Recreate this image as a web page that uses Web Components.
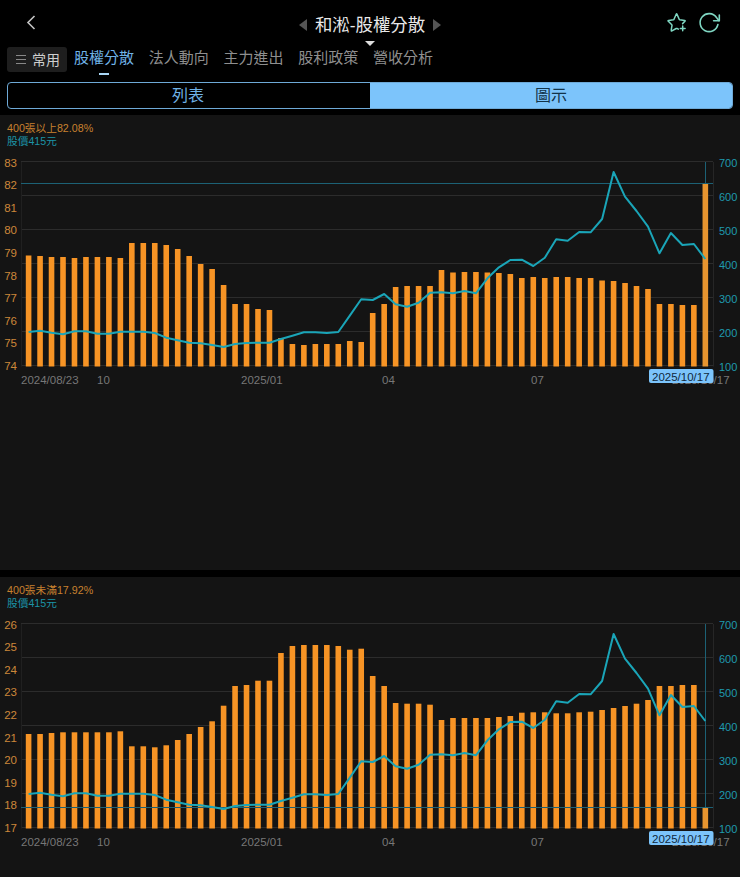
<!DOCTYPE html>
<html lang="zh-Hant">
<head>
<meta charset="utf-8">
<title>股權分散</title>
<style>
    html, body { margin: 0; background: #000; height: 877px; overflow: hidden; }
    body { font-family: "Liberation Sans", "Noto Sans CJK TC", sans-serif; display: flex; flex-direction: column; }
</style>
</head>
<body>
<stock-header>和淞-股權分散</stock-header>
<tab-bar>
    <tab-item active>股權分散</tab-item>
    <tab-item>法人動向</tab-item>
    <tab-item>主力進出</tab-item>
    <tab-item>股利政策</tab-item>
    <tab-item>營收分析</tab-item>
</tab-bar>
<view-toggle left="列表" right="圖示"></view-toggle>

<holding-chart id="upper" max="83" cross="21" style="height:455px">
    400張以上82.08%
    <span slot="price">股價415元</span>
</holding-chart>
<holding-chart id="lower" max="26" cross="183" style="height:300px;margin-top:7px">
    400張未滿17.92%
    <span slot="price">股價415元</span>
</holding-chart>

<script>
const FONT = `"Liberation Sans", "Noto Sans CJK TC", sans-serif`;

class StockHeader extends HTMLElement {
    constructor() {
        super();
        this.attachShadow({ mode: "open" });
        this.shadowRoot.innerHTML = `
            <style>
                :host { display: grid; grid-template-columns: 1fr auto 1fr; align-items: center; height: 47px; position: relative; font-family: ${FONT}; }
                #back { padding: 6px 0 0 26px; height: 26px; }
                #title { display: flex; align-items: center; gap: 8px; color: #e8e8e8; font-size: 17.4px; line-height: 24px; padding-top: 3px; }
                #title i { width: 0; height: 0; border-top: 6px solid transparent; border-bottom: 6px solid transparent; }
                #prev { border-right: 8px solid #555; }
                #next { border-left: 8px solid #555; }
                #tools { display: flex; justify-content: flex-end; gap: 9px; padding: 0 18px 0 0; margin-bottom: 1px; }
                #caret { position: absolute; left: 365px; top: 41px; width: 0; height: 0; border-left: 5px solid transparent; border-right: 5px solid transparent; border-top: 5px solid #ddd; }
                svg { display: block; fill: none; }
            </style>
            <div id="back">
                <svg width="12" height="18" viewBox="0 0 12 18"><path d="M8.5 2L2 8.5L8.5 15" stroke="#c4c4c4" stroke-width="1.6"/></svg>
            </div>
            <div id="title"><i id="prev"></i><slot></slot><i id="next"></i></div>
            <div id="tools">
                <svg width="24" height="24" viewBox="0 0 24 24" stroke="#7fd6c2" stroke-width="1.5" stroke-linejoin="round" stroke-linecap="round">
                    <path d="M13.4 18.2L12 17.5Q11.6 17.3 11.2 17.5L6.9 19.8Q6 20.2 6.2 19.2L7 14.4Q7.1 14 6.8 13.7L3.3 10.3Q2.6 9.6 3.6 9.4L8.4 8.7Q8.8 8.6 9 8.3L11.2 3.2Q11.6 2.3 12 3.2L14.2 8.3Q14.4 8.6 14.8 8.7L19.6 9.4Q20.6 9.6 19.9 10.3L17.6 12.6"/>
                    <path d="M17.7 15v4.8M15.3 17.4h4.8"/>
                </svg>
                <svg width="24" height="24" viewBox="0 0 24 24" stroke="#7fd6c2" stroke-width="1.6" stroke-linejoin="round" stroke-linecap="round">
                    <path d="M19.9 13.5A9 9 0 1 1 18.5 6.5L21 9.7"/>
                    <path d="M21.3 4v5.7h-5.7"/>
                </svg>
            </div>
            <div id="caret"></div>
        `;
    }
}
customElements.define("stock-header", StockHeader);

class TabBar extends HTMLElement {
    constructor() {
        super();
        this.attachShadow({ mode: "open" });
        this.shadowRoot.innerHTML = `
            <style>
                :host { display: flex; align-items: flex-start; gap: 7px; height: 35px; padding-left: 7px; font-family: ${FONT}; }
                #fav { display: flex; align-items: center; gap: 6px; box-sizing: border-box; width: 60px; height: 25px; padding: 0 0 1px 9px; background: #1e1e1e; border-radius: 3px; color: #cfcfcf; font-size: 14px; }
                #fav span { display: block; width: 10px; height: 7px; border-top: 1px solid #888; border-bottom: 1px solid #888; position: relative; }
                #fav span::after { content: ""; position: absolute; left: 0; right: 0; top: 3px; height: 1px; background: #888; }
                #tabs { display: flex; gap: 14.75px; }
            </style>
            <div id="fav"><span></span>常用</div>
            <div id="tabs"><slot></slot></div>
        `;
    }
}
customElements.define("tab-bar", TabBar);

class TabItem extends HTMLElement {
    constructor() {
        super();
        this.attachShadow({ mode: "open" });
        this.shadowRoot.innerHTML = `
            <style>
                :host { display: flex; flex-direction: column; align-items: center; color: #8f8f8f; font-size: 15px; line-height: 22px; }
                :host([active]) { color: #6fb2e6; }
                #mark { width: 10px; height: 2px; margin-top: 4px; }
                :host([active]) #mark { background: #a9d6f5; }
            </style>
            <slot></slot>
            <div id="mark"></div>
        `;
    }
}
customElements.define("tab-item", TabItem);

class ViewToggle extends HTMLElement {
    constructor() {
        super();
        this.attachShadow({ mode: "open" });
        this.shadowRoot.innerHTML = `
            <style>
                :host { display: block; height: 33px; padding: 0 7px; font-family: ${FONT}; }
                #box { display: grid; grid-template-columns: 362px 1fr; height: 27px; box-sizing: border-box; border: 1px solid #6ea9d6; border-radius: 4px; overflow: hidden; font-size: 16px; line-height: 25px; text-align: center; }
                #l { color: #6fb2e6; padding-right: 2px; }
                #r { color: #123349; background: #7cc4fb; }
            </style>
            <div id="box">
                <div id="l">${this.getAttribute("left")}</div>
                <div id="r">${this.getAttribute("right")}</div>
            </div>
        `;
    }
}
customElements.define("view-toggle", ViewToggle);

// the 400+ lots bars and the closing price line, in px below the top of the plot
const BARS_UPPER = [93.5,94,95,95,96,95,95,95,96,81,81,81,83,87,94,102,107,123,142,142,147,148,176,182,183,182,182,182,179,180,151,142,125,124,124,124,108,110.5,110,110,110.5,111,112,116,115,116,115,115,116,116,118.5,119,121,124,127,142,142,143,143,21];
const BARS_LOWER = [110,110,109,108.3,108.3,108.3,108.3,108.3,107.3,122.3,122.3,123.3,121.3,116,110,103,97.3,81.7,62,61,56.7,56.7,29,22,21,21,21,22,25.7,24.7,52,62,79,79.7,79.7,80.7,96,94,94,94,94,93,92,88.7,88.3,88.3,89.3,89.3,88.3,87.7,86,84,82,79.7,76,62,62,61,61,183];
const PRICE = [170,168.7,170.7,172.3,169.3,169.3,171.7,171.7,169.7,169.7,169.7,171,175.7,178.3,180.7,181.3,183,185,182,181,180.7,180.7,177,173.7,170.3,170.3,171,170,153.7,137.3,138,132,142.3,144.7,140.7,130.7,130.3,131.3,129,131.3,116.3,105.3,98,97.7,104,95.7,77.3,78.7,70,70.3,57,10,34.7,49,64.7,91.3,71,83,82,97];

class HoldingChart extends HTMLElement {
    constructor() {
        super();
        this.attachShadow({ mode: "open" });
        this.render();
    }

    set bars(list) {
        this.draw(list);
    }

    draw(bars) {
        const top = 14, h = 204.5, left = 21, right = 713;
        const x = i => 28.6 + i * 11.47;
        const maxV = +this.getAttribute("max");
        const cross = +this.getAttribute("cross");
        let s = "";

        for (let i = 0; i <= 6; i++) {
            const y = top + i * 34 - 0.5;
            s += `<line x1="${left}" x2="${right}" y1="${y}" y2="${y}" stroke="#2c2c2c"/>`;
        }
        s += `<line x1="${left + .5}" x2="${left + .5}" y1="${top}" y2="${top + h}" stroke="#202020"/>`;
        s += `<line x1="${right + .5}" x2="${right + .5}" y1="${top}" y2="${top + h}" stroke="#262626"/>`;

        bars.forEach((b, i) => {
            s += `<rect x="${x(i) - 2.8}" y="${top + b}" width="5.6" height="${h - b}" fill="${i == 59 ? "#e8952f" : "#f79425"}"/>`;
        });

        // crosshair on the last trading day
        s += `<line x1="${left}" x2="${right}" y1="${top + cross + .5}" y2="${top + cross + .5}" stroke="#1c6175"/>`;
        s += `<line x1="705.5" x2="705.5" y1="${top}" y2="${top + cross}" stroke="#1c6175"/>`;

        s += `<polyline fill="none" stroke="#1aa5b8" stroke-width="2" stroke-linejoin="round" points="${PRICE.map((p, i) => x(i).toFixed(1) + "," + (top + p)).join(" ")}"/>`;

        for (let i = 0; i < 10; i++) {
            s += `<text x="17" y="${top + 4.5 + i * 22.62}" text-anchor="end" fill="#cc873a" font-size="11.5">${maxV - i}</text>`;
        }
        for (let i = 0; i <= 6; i++) {
            s += `<text x="719" y="${top + 5 + i * 34}" fill="#1f9aad" font-size="11">${700 - i * 100}</text>`;
        }

        const dates = [[21, "2024/08/23"], [97, "10"], [241, "2025/01"], [382, "04"], [531, "07"], [672, "2025/10/17"]];
        dates.forEach(d => {
            s += `<text x="${d[0]}" y="${top + h + 17.5}" fill="#777" font-size="11.5">${d[1]}</text>`;
        });

        s += `<rect x="649" y="${top + h + 2.5}" width="64.5" height="14" rx="2" fill="#7cc4fb"/>`;
        s += `<text x="652" y="${top + h + 14}" fill="#10283c" font-size="11.5">2025/10/17</text>`;

        this.shadowRoot.querySelector("svg").innerHTML = s;
    }

    render() {
        this.shadowRoot.innerHTML = `
            <style>
                :host { display: block; box-sizing: border-box; padding-top: 7px; background: #141414; font-family: ${FONT}; }
                #legend { padding-left: 7px; font-size: 10.7px; line-height: 12.5px; height: 26px; color: #c8812f; }
                #price { color: #1c93a6; }
                svg { display: block; font-family: ${FONT}; }
            </style>
            <div id="legend">
                <div><slot></slot></div>
                <div id="price"><slot name="price"></slot></div>
            </div>
            <svg width="740" height="240"></svg>
        `;
    }
}
customElements.define("holding-chart", HoldingChart);

document.querySelector("#upper").bars = BARS_UPPER;
document.querySelector("#lower").bars = BARS_LOWER;
</script>
</body>
</html>
